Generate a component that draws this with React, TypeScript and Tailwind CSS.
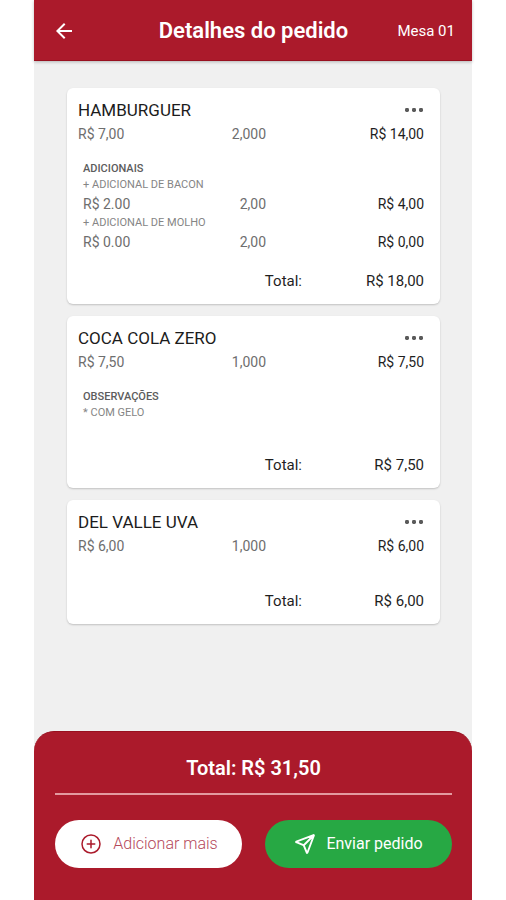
import { IoAddCircleOutline, IoPaperPlaneOutline } from "react-icons/io5";
import { MdArrowBack } from "react-icons/md";

type Extra = { name: string; price: string; quantity: string; total: string };

type Item = {
  name: string;
  price: string;
  quantity: string;
  subtotal: string;
  total: string;
  extras?: Extra[];
  notes?: string[];
};

const items: Item[] = [
  {
    name: "HAMBURGUER",
    price: "R$ 7,00",
    quantity: "2,000",
    subtotal: "R$ 14,00",
    total: "R$ 18,00",
    extras: [
      { name: "ADICIONAL DE BACON", price: "R$ 2.00", quantity: "2,00", total: "R$ 4,00" },
      { name: "ADICIONAL DE MOLHO", price: "R$ 0.00", quantity: "2,00", total: "R$ 0,00" },
    ],
  },
  {
    name: "COCA COLA ZERO",
    price: "R$ 7,50",
    quantity: "1,000",
    subtotal: "R$ 7,50",
    total: "R$ 7,50",
    notes: ["COM GELO"],
  },
  {
    name: "DEL VALLE UVA",
    price: "R$ 6,00",
    quantity: "1,000",
    subtotal: "R$ 6,00",
    total: "R$ 6,00",
  },
];

function MoreIcon() {
  return (
    <svg width="20" height="6" viewBox="0 0 20 6" fill="#5a5a5a" aria-hidden="true">
      <rect x="1" y="1" width="4" height="4" rx="1.4" />
      <rect x="8" y="1" width="4" height="4" rx="1.4" />
      <rect x="15" y="1" width="4" height="4" rx="1.4" />
    </svg>
  );
}

function ItemCard({ item }: { item: Item }) {
  return (
    <article className="flex flex-col rounded-md bg-white pt-[10px] pr-4 pb-[11px] pl-[11px] shadow-[0_1px_2px_rgba(0,0,0,0.2)]">
      <div className="flex h-6 items-center justify-between">
        <h2 className="text-[17px] leading-6 text-[#1c1c1c]">{item.name}</h2>
        <button type="button" aria-label={`Opções de ${item.name}`} className="flex h-6 items-center">
          <MoreIcon />
        </button>
      </div>
      <div className="grid grid-cols-[188fr_158fr] text-sm leading-6">
        <div className="flex justify-between text-[#6e6e6e]">
          <span>{item.price}</span>
          <span>{item.quantity}</span>
        </div>
        <span className="text-right text-[#1f1f1f]">{item.subtotal}</span>
      </div>

      <div className="mt-[15px] text-[11px] leading-4 text-[#858585]">
        {item.extras && (
          <>
            <h3 className="pl-[5px] font-medium text-[#5c5c5c]">ADICIONAIS</h3>
            {item.extras.map((extra) => (
              <div key={extra.name}>
                <p className="pl-[5px]">+ {extra.name}</p>
                <div className="grid grid-cols-[188fr_158fr] text-sm leading-[22px]">
                  <div className="flex justify-between pl-[5px] text-[#6e6e6e]">
                    <span>{extra.price}</span>
                    <span>{extra.quantity}</span>
                  </div>
                  <span className="text-right text-[#1f1f1f]">{extra.total}</span>
                </div>
              </div>
            ))}
          </>
        )}
        {item.notes && (
          <div className="pb-4 pl-[5px]">
            <h3 className="font-medium text-[#5c5c5c]">OBSERVAÇÕES</h3>
            {item.notes.map((note) => (
              <p key={note}>* {note}</p>
            ))}
          </div>
        )}
      </div>

      <div className="mt-4 grid grid-cols-[224fr_122fr] text-right text-[15px] leading-6 text-[#1f1f1f]">
        <span>Total:</span>
        <span>{item.total}</span>
      </div>
    </article>
  );
}

export default function App() {
  return (
    <div className="min-h-screen bg-white px-[34px] font-[Roboto,sans-serif]">
      <div className="flex min-h-screen flex-col bg-[#f0f0f0]">
        <header className="grid h-[61px] grid-cols-[1fr_auto_1fr] items-center border-b border-[#98101f] bg-[#ab1a2b] pt-0.5 pr-[17px] pl-[18px] text-white shadow-[0_1px_3px_rgba(0,0,0,0.25)]">
          <button type="button" aria-label="Voltar" className="flex size-6 items-center justify-center">
            <MdArrowBack size={24} />
          </button>
          <h1 className="text-[22px] leading-8 font-semibold">Detalhes do pedido</h1>
          <span className="text-right text-[15px] leading-6">Mesa 01</span>
        </header>

        <main className="flex flex-1 flex-col gap-3 pt-[27px] pr-8 pb-8 pl-[33px]">
          {items.map((item) => (
            <ItemCard key={item.name} item={item} />
          ))}
        </main>

        <footer className="rounded-t-[20px] border-t border-[#98101f] bg-[#ab1a2b] pt-5 pr-5 pb-8 pl-[21px]">
          <p className="text-center text-xl leading-8 font-semibold text-white">Total: R$ 31,50</p>
          <hr className="mt-[9px] border-t-2 border-[#e39aa0]" />
          <div className="mt-[25px] grid grid-cols-2 gap-[23px]">
            <button
              type="button"
              className="flex h-12 items-center justify-center gap-[10px] rounded-full bg-white text-base font-light text-[#b5485a]"
            >
              <IoAddCircleOutline size={24} className="text-[#ab1a2b]" />
              Adicionar mais
            </button>
            <button
              type="button"
              className="flex h-12 items-center justify-center gap-[10px] rounded-full bg-[#27a844] text-base text-white"
            >
              <IoPaperPlaneOutline size={22} className="[&_path]:stroke-[44px]" />
              Enviar pedido
            </button>
          </div>
        </footer>
      </div>
    </div>
  );
}
